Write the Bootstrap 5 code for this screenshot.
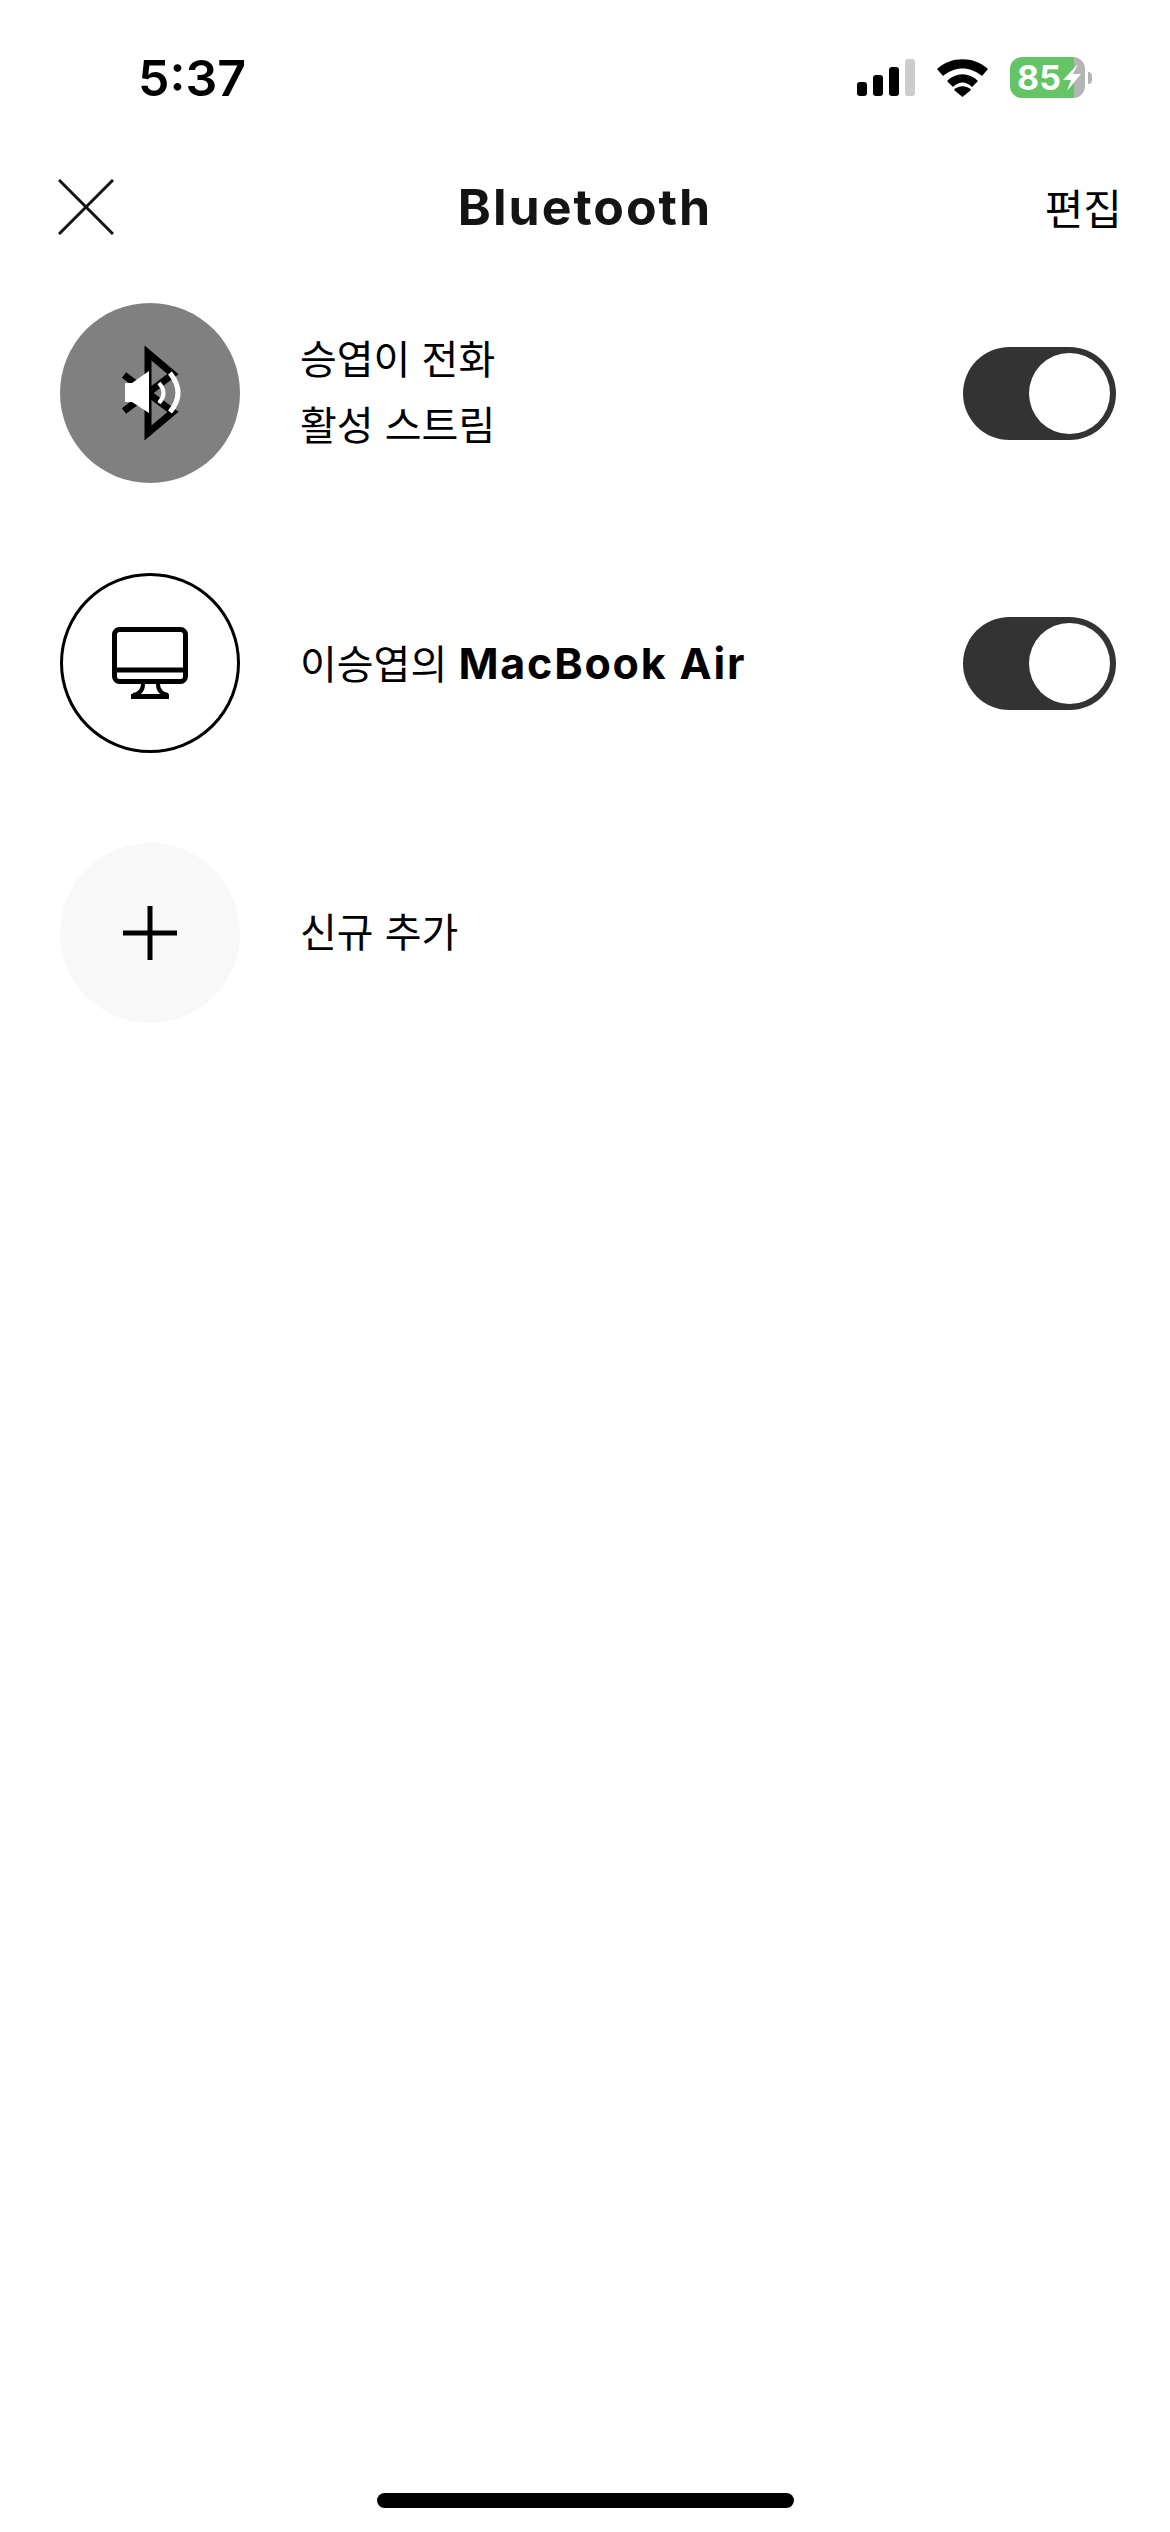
<!DOCTYPE html>
<html lang="ko">

<head>
    <meta charset="UTF-8">
    <meta name="viewport" content="width=device-width, initial-scale=1.0">
    <title>Bluetooth</title>
    <link href="https://cdn.jsdelivr.net/npm/bootstrap@5.3.0/dist/css/bootstrap.min.css" rel="stylesheet">
    <style>
        body { background: #fff; color: #000; font-family: Inter, "Noto Sans CJK KR", sans-serif; }
        .phone { width: 1170px; height: 2532px; }
        .status-bar { height: 150px; padding: 50px 78px 0 138px; }
        .clock { font-size: 50px; font-weight: 600; line-height: 56px; }
        .status-icons { gap: 22px; margin-top: 7px; }
        .battery { width: 75px; height: 41px; border-radius: 12px; background: linear-gradient(90deg, #65c466 85%, #b4b4b4 85%); color: #fff; font-size: 34px; font-weight: 700; line-height: 41px; padding-left: 7px; gap: 2px; }
        .nub { width: 4px; height: 12px; background: #b4b4b4; border-radius: 0 4px 4px 0; margin-left: 3px; }
        .top-bar { height: 113px; padding: 0 48px 0 58px; }
        .page-title { color: #141414; font-size: 50px; font-weight: 700; line-height: 60px; letter-spacing: 2px; margin: 0; white-space: nowrap; }
        .edit-link { font-family: "Noto Sans CJK KR", sans-serif; font-size: 42px; line-height: 60px; color: #000; text-decoration: none; }
        .device-list { padding: 40px 54px 0 60px; }
        .device-row { height: 180px; margin-bottom: 90px; }
        .device-icon { width: 180px; height: 180px; flex-shrink: 0; margin-right: 60px; }
        .icon-active { background: #808080; }
        .icon-outline { border: 3px solid #000; }
        .icon-add { background: #f8f8f8; }
        .device-text { font-family: "Noto Sans CJK KR", sans-serif; font-size: 40px; line-height: 66px; margin-bottom: 6px; }
        .device-text b { font-family: Inter, sans-serif; font-weight: 700; font-size: 43px; letter-spacing: 1.8px; }
        .text-mixed { margin-bottom: 2px; }
        .toggle-pill { width: 153px; height: 93px; background: #333; padding-right: 6px; }
        .toggle-knob { width: 81px; height: 81px; background: #fff; }
        .home-bar { width: 417px; height: 15px; background: #000; bottom: 24px; left: 377px; }
    </style>
</head>

<body class="m-0">
    <div class="phone position-relative overflow-hidden">
        <!-- barra de estado -->
        <div class="status-bar d-flex justify-content-between align-items-start">
            <div class="clock">5:37</div>
            <div class="status-icons d-flex align-items-center">
                <svg width="58" height="37" viewBox="0 0 58 37">
                    <rect x="0" y="23" width="10" height="14" rx="3" fill="#000"/>
                    <rect x="16" y="16" width="10" height="21" rx="3" fill="#000"/>
                    <rect x="32" y="8" width="10" height="29" rx="3" fill="#000"/>
                    <rect x="48" y="0" width="10" height="37" rx="3" fill="#ccc"/>
                </svg>
                <svg width="51" height="38" viewBox="0 0 51 38">
                    <path d="M0 10 C14 -3 37 -3 51 10 L45 17 C33 7 18 7 6 17 Z" fill="#000"/>
                    <path d="M10 22 C19 13 32 13 41 22 L35 28 C29 22 22 22 16 28 Z" fill="#000"/>
                    <path d="M17 31 C21 26 30 26 34 31 L25.5 38 Z" fill="#000"/>
                </svg>
                <div class="d-flex align-items-center">
                    <div class="battery d-flex align-items-center">
                        <span>85</span>
                        <svg width="18" height="27" viewBox="0 0 18 27"><path d="M15 0 L0 16 H8 L4 27 L18 10 H10 Z" fill="#fff"/></svg>
                    </div>
                    <div class="nub"></div>
                </div>
            </div>
        </div>

        <!-- encabezado -->
        <div class="top-bar d-flex justify-content-between align-items-center position-relative">
            <svg width="56" height="56" viewBox="0 0 56 56">
                <path d="M1 1 L55 55 M55 1 L1 55" fill="none" stroke="#141414" stroke-width="3"/>
            </svg>
            <h1 class="page-title position-absolute top-50 start-50 translate-middle">Bluetooth</h1>
            <a class="edit-link" href="#">편집</a>
        </div>

        <!-- lista de dispositivos -->
        <div class="device-list">
            <div class="device-row d-flex align-items-center">
                <div class="device-icon icon-active rounded-circle">
                    <svg width="180" height="180" viewBox="20 18 180 180">
                        <path d="M84 90 L133 127 L108 148 V68 L133 89 L84 126" fill="none" stroke="#000" stroke-width="7"/>
                        <path d="M85 98 H92 L109 86 V128 L92 117 H85 Z" fill="#fff"/>
                        <path d="M119 98 Q128 108 119 118" fill="none" stroke="#fff" stroke-width="4"/>
                        <path d="M130 88 Q146 108 130 127" fill="none" stroke="#fff" stroke-width="5"/>
                    </svg>
                </div>
                <div class="device-text flex-grow-1">
                    <div>승엽이 전화</div>
                    <div>활성 스트림</div>
                </div>
                <div class="toggle-pill rounded-pill d-flex justify-content-end align-items-center">
                    <div class="toggle-knob rounded-circle"></div>
                </div>
            </div>

            <div class="device-row d-flex align-items-center">
                <div class="device-icon icon-outline rounded-circle d-flex align-items-center justify-content-center">
                    <svg width="76" height="72" viewBox="0 0 76 72">
                        <rect x="2.5" y="2.5" width="71" height="52" rx="5" fill="none" stroke="#000" stroke-width="5"/>
                        <path d="M2 43 H74" stroke="#000" stroke-width="5"/>
                        <path d="M31 57 C31 64 27 67 21 68 M46 57 C46 64 50 67 56 68" fill="none" stroke="#000" stroke-width="4"/>
                        <path d="M19 69.5 H57" stroke="#000" stroke-width="5"/>
                    </svg>
                </div>
                <div class="device-text text-mixed flex-grow-1">이승엽의 <b>MacBook Air</b></div>
                <div class="toggle-pill rounded-pill d-flex justify-content-end align-items-center">
                    <div class="toggle-knob rounded-circle"></div>
                </div>
            </div>

            <div class="device-row d-flex align-items-center">
                <div class="device-icon icon-add rounded-circle d-flex align-items-center justify-content-center">
                    <svg width="54" height="54" viewBox="0 0 54 54">
                        <path d="M0 27 H54 M27 0 V54" stroke="#000" stroke-width="5"/>
                    </svg>
                </div>
                <div class="device-text flex-grow-1">신규 추가</div>
            </div>
        </div>

        <div class="home-bar position-absolute rounded-pill"></div>
    </div>

    <script src="https://cdn.jsdelivr.net/npm/bootstrap@5.3.0/dist/js/bootstrap.bundle.min.js"></script>
</body>

</html>
